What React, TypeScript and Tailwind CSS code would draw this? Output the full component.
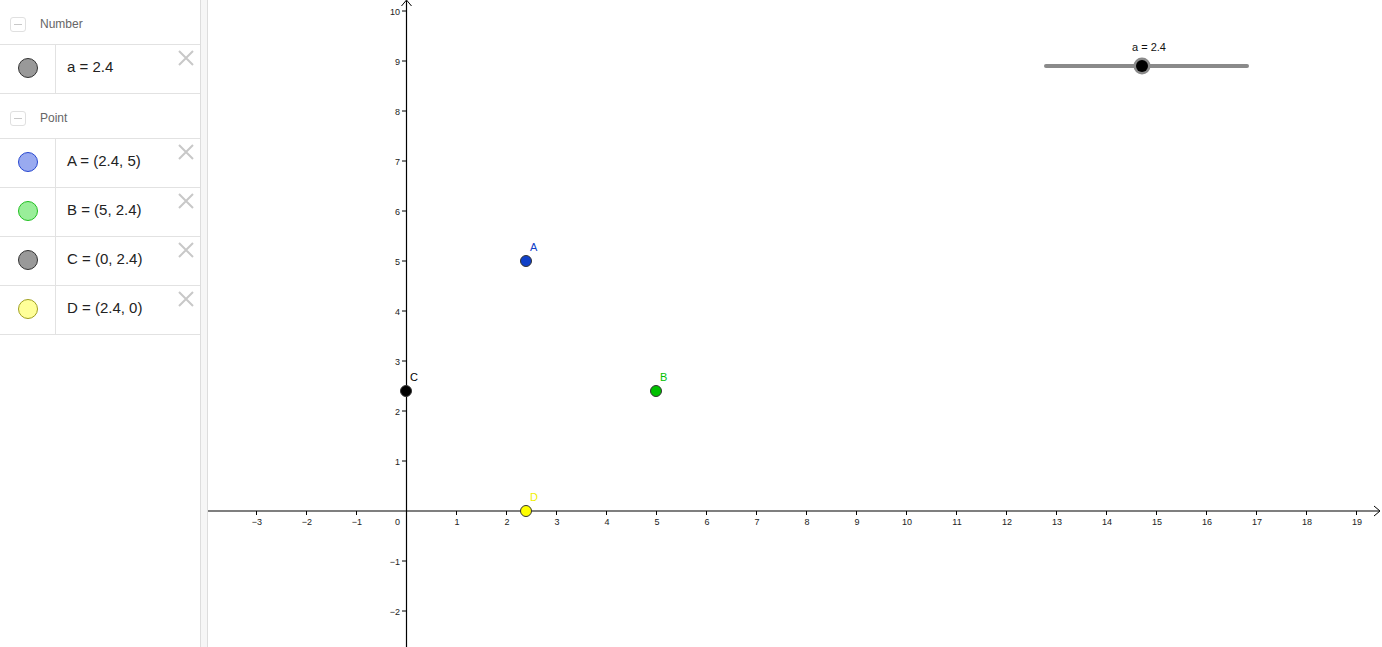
import React from "react";

type Row = { id: string; label: string; fill: string; stroke: string };

const numberRows: Row[] = [{ id: "a", label: "a = 2.4", fill: "#999999", stroke: "#333333" }];

const pointRows: Row[] = [
  { id: "A", label: "A = (2.4, 5)", fill: "#99aaf0", stroke: "#2848d0" },
  { id: "B", label: "B = (5, 2.4)", fill: "#99ee99", stroke: "#22c022" },
  { id: "C", label: "C = (0, 2.4)", fill: "#999999", stroke: "#333333" },
  { id: "D", label: "D = (2.4, 0)", fill: "#ffff99", stroke: "#a0a020" },
];

// canvas origin (graphics view starts at x = 208 on the page)
const OX = 198;
const OY = 511;
const U = 50;

const Header = ({ title, top }: { title: string; top?: boolean }) => (
  <div className={`flex items-center pl-[10px] pt-[4px] ${top ? "h-[44px]" : "h-[45px] border-t border-[#e2e2e2]"}`}>
    <div className="w-[16px] h-[15px] rounded-[3px] border border-[#e0e0e0] flex items-center justify-center">
      <div className="w-[8px] h-[1px] bg-[#c8c8c8]" />
    </div>
    <span className="ml-[14px] text-[12px] text-[#666666]">{title}</span>
  </div>
);

const ItemRow = ({ row, last }: { row: Row; last?: boolean }) => (
  <div className={`flex h-[49px] border-t border-[#e2e2e2] ${last ? "h-[50px] border-b" : ""}`}>
    <div className="w-[56px] border-r border-[#e2e2e2] flex items-center justify-center pb-[3px]">
      <div
        className="w-[20px] h-[20px] rounded-full border"
        style={{ background: row.fill, borderColor: row.stroke }}
      />
    </div>
    <div className="flex-1 relative flex items-center pl-[11px] pb-[3px] text-[15px] text-[#222222]">
      {row.label}
      <svg className="absolute right-[6px] top-[5px]" width="16" height="16" viewBox="0 0 16 16">
        <path d="M1 1 L15 15 M15 1 L1 15" stroke="#c8c8c8" strokeWidth="2" />
      </svg>
    </div>
  </div>
);

const Graph = () => {
  const xs = Array.from({ length: 23 }, (_, i) => i - 3).filter((v) => v !== 0);
  const ys = Array.from({ length: 13 }, (_, i) => i - 2).filter((v) => v !== 0);
  const fmt = (v: number) => (v < 0 ? `\u2212${-v}` : `${v}`);
  const pts = [
    { n: "A", x: 2.4, y: 5, fill: "#1040c8", label: "#1040c8" },
    { n: "B", x: 5, y: 2.4, fill: "#00c000", label: "#00c000" },
    { n: "C", x: 0, y: 2.4, fill: "#000000", label: "#000000" },
    { n: "D", x: 2.4, y: 0, fill: "#ffff00", label: "#f0f000" },
  ];
  return (
    <svg width="1174" height="647" className="block" style={{ fontFamily: "'Liberation Sans', Arial, sans-serif" }}>
      {/* axes */}
      <line x1="0" y1={OY} x2="1171" y2={OY} stroke="#000" strokeWidth="1.2" />
      <path d={`M1166 ${OY - 5} L1172 ${OY} L1166 ${OY + 5}`} fill="none" stroke="#000" strokeWidth="1" />
      <line x1={OX + 0.5} y1="1" x2={OX + 0.5} y2="647" stroke="#000" strokeWidth="1.2" />
      <path d={`M${OX - 4.5} 6 L${OX + 0.5} 0 L${OX + 5.5} 6`} fill="none" stroke="#000" strokeWidth="1" />
      {xs.map((v) => (
        <g key={`x${v}`}>
          <line x1={OX + v * U + 0.5} y1={OY} x2={OX + v * U + 0.5} y2={OY + 4} stroke="#000" strokeWidth="1" />
          <text x={OX + v * U + 1} y={OY + 14} fontSize="9" textAnchor="middle" fill="#222">
            {fmt(v)}
          </text>
        </g>
      ))}
      {ys.map((v) => (
        <g key={`y${v}`}>
          <line x1={OX - 4} y1={OY - v * U} x2={OX} y2={OY - v * U} stroke="#000" strokeWidth="1" />
          <text x={OX - 6} y={OY - v * U + 4} fontSize="9" textAnchor="end" fill="#222">
            {fmt(v)}
          </text>
        </g>
      ))}
      <text x={OX - 6} y={OY + 14} fontSize="9" textAnchor="end" fill="#222">
        0
      </text>
      {/* points */}
      {pts.map((p) => (
        <g key={p.n}>
          <circle cx={OX + p.x * U} cy={OY - p.y * U} r="5.5" fill={p.fill} stroke="#333" strokeWidth="1" />
          <text x={OX + p.x * U + 4} y={OY - p.y * U - 10} fontSize="11" fill={p.label}>
            {p.n}
          </text>
        </g>
      ))}
      {/* slider */}
      <text x="941" y="51" fontSize="11" textAnchor="middle" fill="#111">
        a = 2.4
      </text>
      <line x1="838" y1="66" x2="1039" y2="66" stroke="#8a8a8a" strokeWidth="4" strokeLinecap="round" />
      <circle cx="934" cy="66" r="8.5" fill="#8a8a8a" />
      <circle cx="934" cy="66" r="6" fill="#000" />
    </svg>
  );
};

export default function App() {
  return (
    <div className="flex h-[647px] w-[1382px] overflow-hidden bg-white" style={{ fontFamily: "'Liberation Sans', Arial, sans-serif" }}>
      <div className="w-[200px] shrink-0">
        <Header title="Number" top />
        {numberRows.map((r) => (
          <ItemRow key={r.id} row={r} />
        ))}
        <Header title="Point" />
        {pointRows.map((r, i) => (
          <ItemRow key={r.id} row={r} last={i === pointRows.length - 1} />
        ))}
      </div>
      <div className="w-[8px] shrink-0 bg-[#f6f6f6] border-l border-r border-[#dddddd]" />
      <div className="flex-1 overflow-hidden">
        <Graph />
      </div>
    </div>
  );
}
